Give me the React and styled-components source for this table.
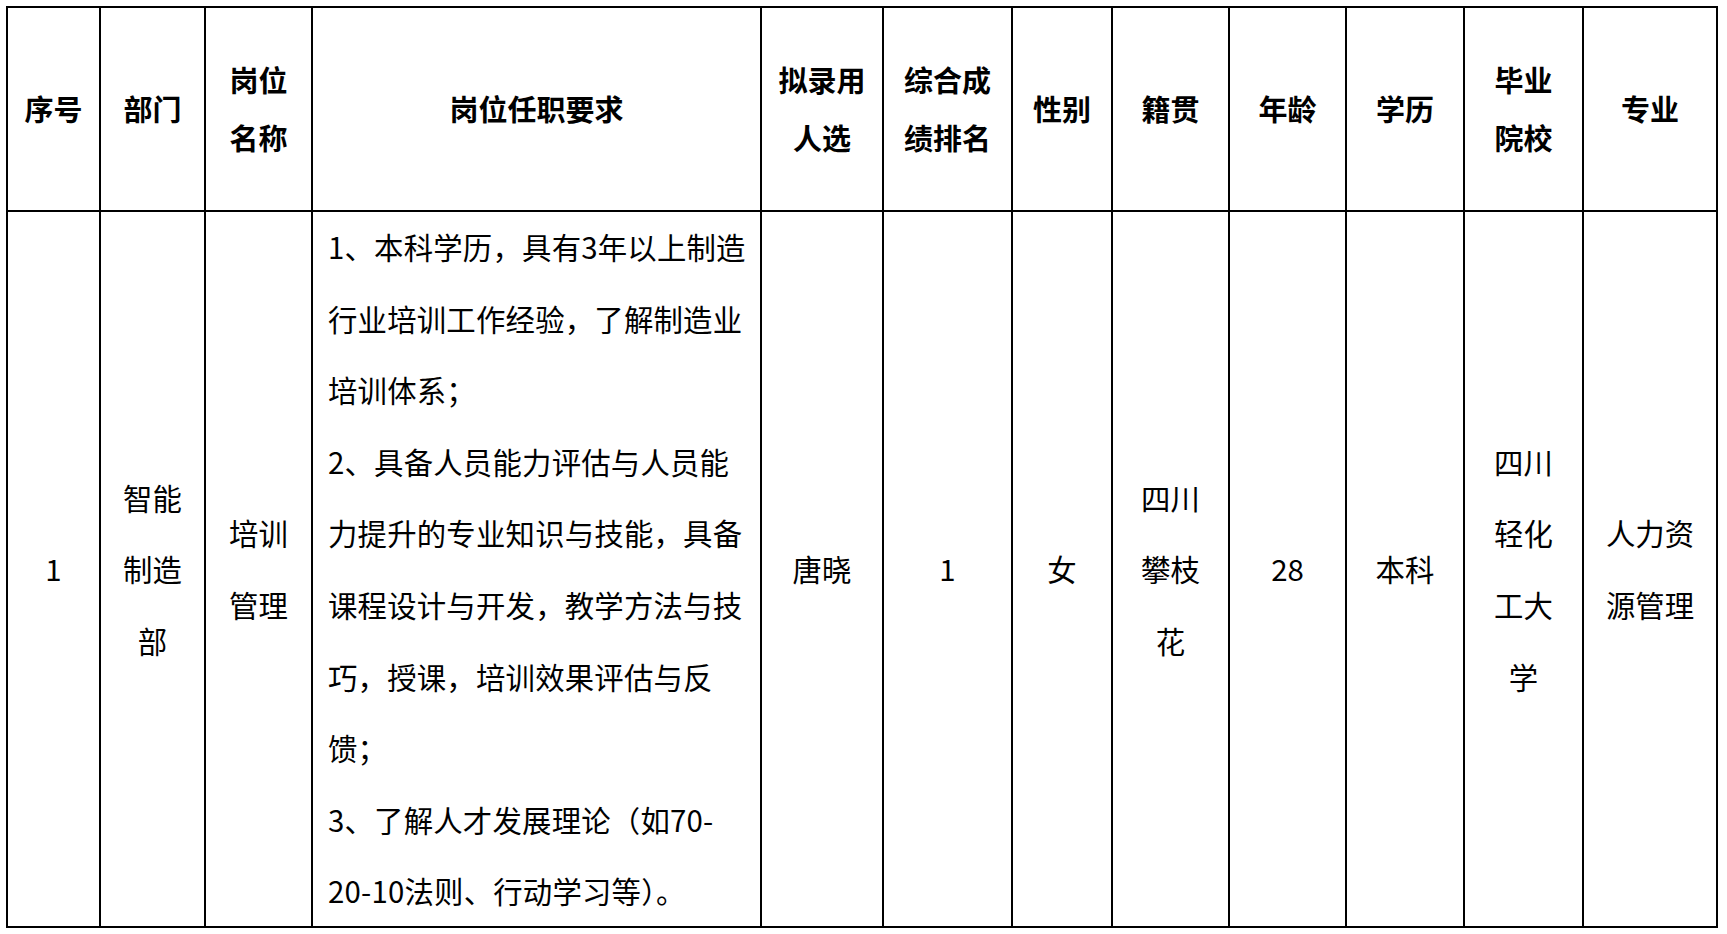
import React from "react";
import styled, { createGlobalStyle } from "styled-components";

const Global = createGlobalStyle`
  html, body { margin: 0; padding: 0; background: #fff; }
  body { font-family: "Noto Sans CJK SC", "Noto Sans", sans-serif; color: #000; }
`;

const Page = styled.div`
  padding: 6px;
`;

const Grid = styled.div`
  display: grid;
  grid-template-columns: 93px 105px 107px 449px 122px 129px 100px 117px 117px 118px 119px 134px;
  grid-template-rows: 204px 716px;
  width: max-content;
  border-left: 2px solid #000;
  border-top: 2px solid #000;
`;

const Cell = styled.div`
  box-sizing: border-box;
  border-right: 2px solid #000;
  border-bottom: 2px solid #000;
  display: flex;
  flex-direction: column;
  align-items: ${(p) => (p.$left ? "flex-start" : "center")};
  justify-content: center;
  padding-left: ${(p) => (p.$left ? "15px" : "0")};
  font-size: ${(p) => (p.$head ? "29px" : "29.4px")};
  font-weight: ${(p) => (p.$head ? 700 : 400)};
  line-height: ${(p) => (p.$head ? "57.6px" : "71.6px")};
  letter-spacing: ${(p) => (p.$left ? "0.2px" : "0")};
  text-align: center;
  white-space: nowrap;
`;

const Line = styled.span`
  display: block;
`;

const headers = [
  ["序号"],
  ["部门"],
  ["岗位", "名称"],
  ["岗位任职要求"],
  ["拟录用", "人选"],
  ["综合成", "绩排名"],
  ["性别"],
  ["籍贯"],
  ["年龄"],
  ["学历"],
  ["毕业", "院校"],
  ["专业"],
];

const body = [
  ["1"],
  ["智能", "制造", "部"],
  ["培训", "管理"],
  [
    "1、本科学历，具有3年以上制造",
    "行业培训工作经验，了解制造业",
    "培训体系；",
    "2、具备人员能力评估与人员能",
    "力提升的专业知识与技能，具备",
    "课程设计与开发，教学方法与技",
    "巧，授课，培训效果评估与反",
    "馈；",
    "3、了解人才发展理论（如70-",
    "20-10法则、行动学习等）。",
  ],
  ["唐晓"],
  ["1"],
  ["女"],
  ["四川", "攀枝", "花"],
  ["28"],
  ["本科"],
  ["四川", "轻化", "工大", "学"],
  ["人力资", "源管理"],
];

export default function App() {
  return (
    <Page>
      <Global />
      <Grid>
        {headers.map((lines, i) => (
          <Cell key={"h" + i} $head>
            {lines.map((l, j) => (
              <Line key={j}>{l}</Line>
            ))}
          </Cell>
        ))}
        {body.map((lines, i) => (
          <Cell key={"b" + i} $left={i === 3}>
            {lines.map((l, j) => (
              <Line key={j}>{l}</Line>
            ))}
          </Cell>
        ))}
      </Grid>
    </Page>
  );
}
